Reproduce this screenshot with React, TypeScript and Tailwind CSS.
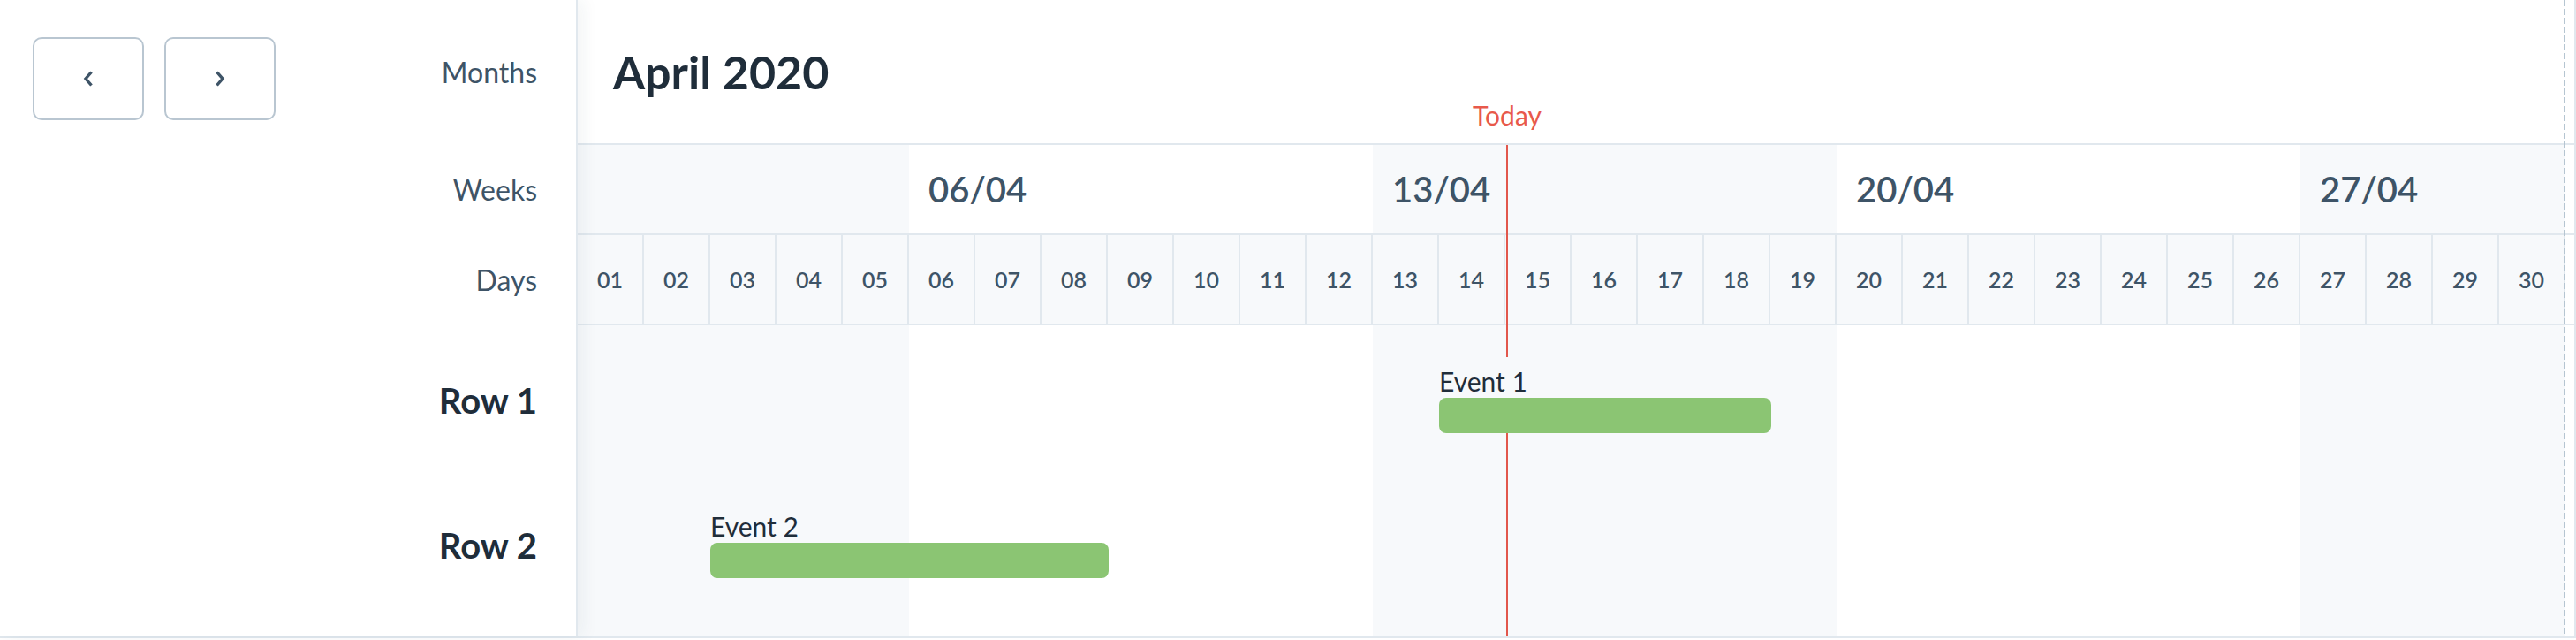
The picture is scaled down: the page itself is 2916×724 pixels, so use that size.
import React from "react";

const DAY = 75;

const days = Array.from({ length: 30 }, (_, i) => String(i + 1).padStart(2, "0"));

const weeks = [
  { label: "", days: 5, shaded: true },
  { label: "06/04", days: 7, shaded: false },
  { label: "13/04", days: 7, shaded: true },
  { label: "20/04", days: 7, shaded: false },
  { label: "27/04", days: 4, shaded: true },
];

const rows = [
  { name: "Row 1", events: [{ label: "Event 1", start: 13, span: 5, bg: "#f7f9fb" }] },
  { name: "Row 2", events: [{ label: "Event 2", start: 2, span: 6, bg: "transparent" }] },
];

function Chevron({ dir }: { dir: "left" | "right" }) {
  return (
    <svg width="14" height="20" viewBox="0 0 14 20" fill="none">
      <path
        d={dir === "left" ? "M10.5 2.5 L4 10 L10.5 17.5" : "M3.5 2.5 L10 10 L3.5 17.5"}
        stroke="#3e5467"
        strokeWidth="3.4"
        strokeLinecap="butt"
        strokeLinejoin="miter"
      />
    </svg>
  );
}

export default function App() {
  return (
    <div className="w-[2916px] h-[724px] bg-white font-['Lato',sans-serif]">
      <div className="flex h-[722px] border-b-2 border-r-2 border-[#e1e8ee]">
        {/* Left panel */}
        <div className="relative z-30 w-[654px] shrink-0 flex flex-col bg-white border-r-2 border-[#e1e8ee] shadow-[6px_0_18px_rgba(40,60,80,0.06)]">
          <div className="h-[164px] flex items-start justify-between pr-[44px]">
            <div className="flex gap-[23px] pl-[37px] pt-[42px]">
              <button className="w-[126px] h-[94px] rounded-[10px] border-2 border-[#b9c6d1] bg-white flex items-center justify-center">
                <Chevron dir="left" />
              </button>
              <button className="w-[126px] h-[94px] rounded-[10px] border-2 border-[#b9c6d1] bg-white flex items-center justify-center">
                <Chevron dir="right" />
              </button>
            </div>
            <div className="self-center text-[32px] leading-[32px] text-[#3e5467]">Months</div>
          </div>
          <div className="h-[102px] flex items-center justify-end pr-[44px] text-[32px] leading-[32px] text-[#3e5467]">
            Weeks
          </div>
          <div className="h-[102px] flex items-center justify-end pr-[44px] text-[32px] leading-[32px] text-[#3e5467]">
            Days
          </div>
          <div className="flex-1 pt-[3px] flex flex-col">
            {rows.map((r) => (
              <div
                key={r.name}
                className="h-[164px] flex items-center justify-end pr-[44px] text-[40px] leading-[40px] font-bold text-[#1f2d3a]"
              >
                {r.name}
              </div>
            ))}
          </div>
        </div>

        {/* Timeline */}
        <div className="relative flex-1 flex flex-col">
          <div className="h-[164px] shrink-0 flex items-center pl-[40px] border-b-2 border-[#e1e8ee]">
            <span className="text-[52px] leading-[52px] font-bold text-[#1f2d3a]">April 2020</span>
          </div>

          <div className="h-[102px] shrink-0 flex border-b-2 border-[#e1e8ee]">
            {weeks.map((w, i) => (
              <div
                key={i}
                style={{ width: w.days * DAY }}
                className={`h-full flex items-center pl-[22px] text-[40px] leading-[40px] font-semibold text-[#3e5467] ${
                  w.shaded ? "bg-[#f7f9fb]" : "bg-white"
                }`}
              >
                {w.label}
              </div>
            ))}
            <div className="flex-1" />
          </div>

          <div className="h-[102px] shrink-0 flex border-b-2 border-[#e1e8ee] bg-[#f7f9fb]">
            {days.map((d) => (
              <div
                key={d}
                className="w-[75px] h-full shrink-0 flex items-center justify-center border-r-2 border-[#e1e8ee] text-[25px] leading-[25px] font-semibold text-[#3e5467]"
              >
                {d}
              </div>
            ))}
            <div className="flex-1 bg-white" />
          </div>

          <div className="relative flex-1 pt-[3px] flex flex-col bg-[linear-gradient(to_right,#f7f9fb_0px,#f7f9fb_375px,#ffffff_375px,#ffffff_900px,#f7f9fb_900px,#f7f9fb_1425px,#ffffff_1425px,#ffffff_1950px,#f7f9fb_1950px,#f7f9fb_2250px,#ffffff_2250px)]">
            {rows.map((r) => (
              <div key={r.name} className="relative h-[164px] shrink-0">
                {r.events.map((e) => (
                  <div
                    key={e.label}
                    className="absolute z-10 top-[33px] flex flex-col gap-[4px] pt-[12px]"
                    style={{ left: e.start * DAY, width: e.span * DAY + 1, backgroundColor: e.bg }}
                  >
                    <span className="text-[30px] leading-[30px] text-[#1f2d3a]">{e.label}</span>
                    <div className="h-[40px] rounded-[8px] bg-[#8bc573]" />
                  </div>
                ))}
              </div>
            ))}
          </div>

          {/* Today line: above grid, below events */}
          <div className="absolute top-[164px] bottom-0 left-[1051px] w-[2px] bg-[#e2574c]" />

          {/* Today label */}
          <div className="absolute top-[115px] left-[1052px] -translate-x-1/2 text-[30px] leading-[30px] text-[#e8594b] whitespace-nowrap">
            Today
          </div>

          {/* End dashed line */}
          <div className="absolute z-20 top-0 bottom-0 left-[2248px] w-[2px] bg-[repeating-linear-gradient(to_bottom,#b5c5d1_0px,#b5c5d1_7px,transparent_7px,transparent_10px)]" />
        </div>
      </div>
    </div>
  );
}
